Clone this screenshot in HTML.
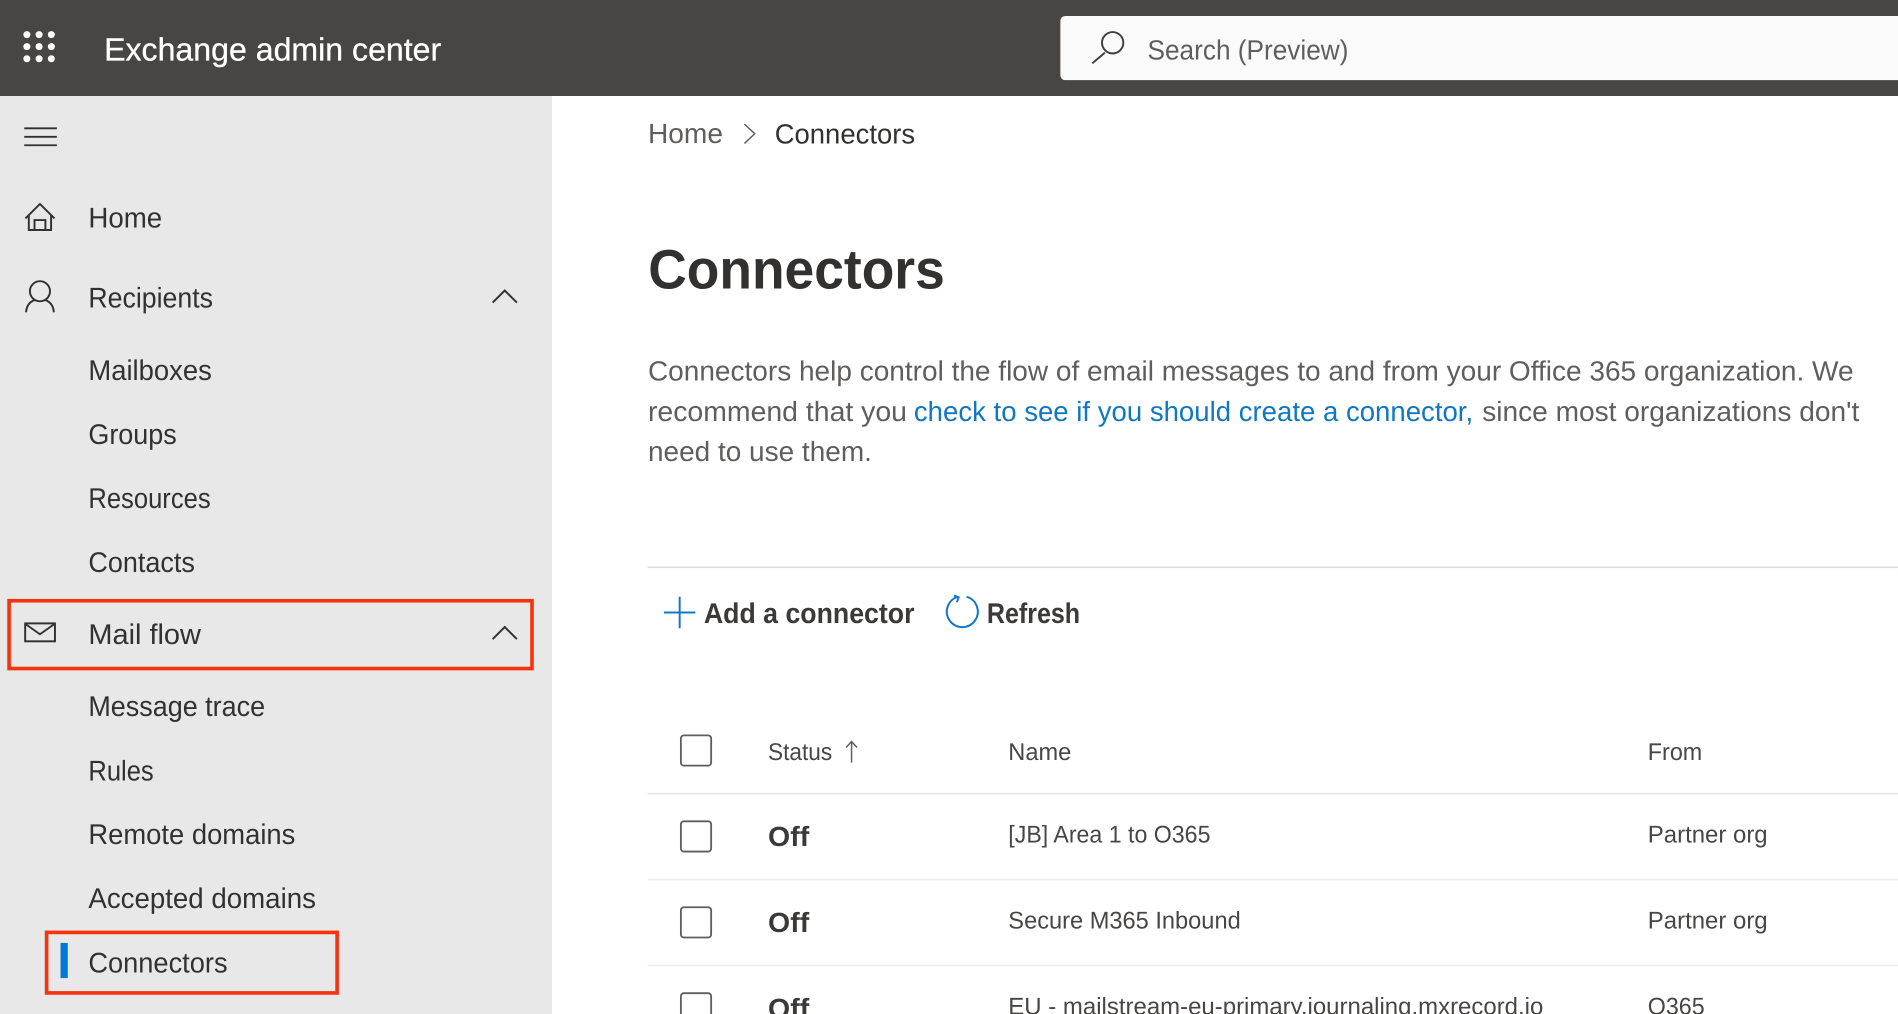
<!DOCTYPE html>
<html lang="en"><head><meta charset="utf-8"><title>Exchange admin center - Connectors</title>
<style>
html,body{margin:0;padding:0;background:#fff;width:1898px;height:1014px;overflow:hidden}
svg{display:block;position:absolute;left:0;top:0}
text{font-family:"Liberation Sans",sans-serif;fill:#323130;text-rendering:geometricPrecision}
.nav{font-size:23.5px}
.p{font-size:23px;fill:#605e5c}
.t{font-size:20px;fill:#484644}
.off{font-size:23px;font-weight:bold;fill:#3b3a39}
.btn{font-size:23.5px;font-weight:bold;fill:#3b3a39}
</style></head><body>
<svg width="1898" height="1014" viewBox="0 0 1568 837.7" xmlns="http://www.w3.org/2000/svg">
<rect width="1568" height="838" fill="#fff"/>
<rect width="456" y="79.3" height="759" fill="#e8e8e8"/>
<rect width="1568" height="79.3" fill="#474645"/>
<g fill="#fff"><circle cx="22.2" cy="28.6" r="2.9"/><circle cx="32.3" cy="28.6" r="2.9"/><circle cx="42.4" cy="28.6" r="2.9"/><circle cx="22.2" cy="38.5" r="2.9"/><circle cx="32.3" cy="38.5" r="2.9"/><circle cx="42.4" cy="38.5" r="2.9"/><circle cx="22.2" cy="48.5" r="2.9"/><circle cx="32.3" cy="48.5" r="2.9"/><circle cx="42.4" cy="48.5" r="2.9"/></g>
<text x="86" y="50" font-size="26.5" style="fill:#fff;stroke:#fff;stroke-width:.25" textLength="278.5" lengthAdjust="spacingAndGlyphs">Exchange admin center</text>
<rect x="876" y="13.2" width="700" height="53" rx="4" fill="#fafafa"/>
<circle cx="919.2" cy="35.3" r="8.8" fill="none" stroke="#3f3e3d" stroke-width="1.6"/>
<path d="M912.8 43.5 L902.4 52.3" stroke="#3f3e3d" stroke-width="1.6" fill="none"/>
<text x="948" y="49" font-size="23" style="fill:#605e5c" textLength="166" lengthAdjust="spacingAndGlyphs">Search (Preview)</text>

<path d="M20 106H47M20 113H47M20 120H47" stroke="#323130" stroke-width="1.5" fill="none"/>
<path d="M21 180.5 L33 168.5 L45 180.5 M23.8 177.5 V190 H42.2 V177.5 M28.5 190 V181.8 H37.5 V190" stroke="#323130" stroke-width="1.6" fill="none"/>
<circle cx="33" cy="240.6" r="8.3" fill="none" stroke="#323130" stroke-width="1.6"/>
<path d="M21.5 258 C22 252 25 249 29 247.8 M44.5 258 C44 252 41 249 37 247.8" stroke="#323130" stroke-width="1.6" fill="none"/>
<path d="M407 250 L417 240 L427 250" stroke="#323130" stroke-width="1.6" fill="none"/>
<rect x="20.8" y="515" width="24.6" height="14.8" stroke="#323130" stroke-width="1.6" fill="none"/>
<path d="M21 515.5 L33 524 L45 515.5" stroke="#323130" stroke-width="1.5" fill="none"/>
<path d="M407 528 L417 518 L427 528" stroke="#323130" stroke-width="1.6" fill="none"/>

<text class="nav" x="73" y="188" textLength="61" lengthAdjust="spacingAndGlyphs">Home</text>
<text class="nav" x="73" y="254" textLength="103" lengthAdjust="spacingAndGlyphs">Recipients</text>
<text class="nav" x="73" y="314" textLength="102" lengthAdjust="spacingAndGlyphs">Mailboxes</text>
<text class="nav" x="73" y="367" textLength="73" lengthAdjust="spacingAndGlyphs">Groups</text>
<text class="nav" x="73" y="419.7" textLength="101" lengthAdjust="spacingAndGlyphs">Resources</text>
<text class="nav" x="73" y="472.7" textLength="88" lengthAdjust="spacingAndGlyphs">Contacts</text>
<text class="nav" x="73" y="532" textLength="93" lengthAdjust="spacingAndGlyphs">Mail flow</text>
<text class="nav" x="73" y="591.7" textLength="146" lengthAdjust="spacingAndGlyphs">Message trace</text>
<text class="nav" x="73" y="644.7" textLength="54" lengthAdjust="spacingAndGlyphs">Rules</text>
<text class="nav" x="73" y="697.3" textLength="171" lengthAdjust="spacingAndGlyphs">Remote domains</text>
<text class="nav" x="73" y="750.3" textLength="188" lengthAdjust="spacingAndGlyphs">Accepted domains</text>
<text class="nav" x="73" y="803.3" textLength="115" lengthAdjust="spacingAndGlyphs">Connectors</text>

<rect x="7.5" y="496.3" width="432" height="56" fill="none" stroke="#f4330f" stroke-width="3"/>
<rect x="38.5" y="770.3" width="240" height="50" fill="none" stroke="#f4330f" stroke-width="3"/>
<rect x="50" y="779" width="6" height="29" fill="#0078d4"/>

<text x="535.3" y="118.3" font-size="23" style="fill:#605e5c" textLength="62" lengthAdjust="spacingAndGlyphs">Home</text>
<path d="M615 102.5 L623.5 110.5 L615 118.5" stroke="#605e5c" stroke-width="1.2" fill="none"/>
<text x="640" y="118.7" font-size="23" textLength="116" lengthAdjust="spacingAndGlyphs">Connectors</text>

<text x="535.5" y="238.3" font-size="46" font-weight="bold" textLength="245" lengthAdjust="spacingAndGlyphs">Connectors</text>

<text class="p" x="535.3" y="314.5" textLength="996" lengthAdjust="spacingAndGlyphs">Connectors help control the flow of email messages to and from your Office 365 organization. We</text>
<text class="p" x="535.3" y="348" textLength="214" lengthAdjust="spacingAndGlyphs">recommend that you</text>
<text class="p" x="755" y="348" style="fill:#0f77c4" textLength="462" lengthAdjust="spacingAndGlyphs">check to see if you should create a connector,</text>
<text class="p" x="1224.5" y="348" textLength="311.5" lengthAdjust="spacingAndGlyphs">since most organizations don't</text>
<text class="p" x="535.3" y="381" textLength="185" lengthAdjust="spacingAndGlyphs">need to use them.</text>

<rect x="535" y="468" width="1033" height="1.3" fill="#dcdcdc"/>

<path d="M548.5 506H574.5M561.5 493V519" stroke="#0f77c4" stroke-width="1.6" fill="none"/>
<text class="btn" x="581.5" y="514.7" textLength="174" lengthAdjust="spacingAndGlyphs">Add a connector</text>
<path d="M791.5 493 A12.8 12.8 0 1 0 798.5 493" stroke="#0f77c4" stroke-width="1.6" fill="none"/>
<path d="M788 492 L792 493.5 L790.5 497.5" stroke="#0f77c4" stroke-width="1.6" fill="none"/>
<text class="btn" x="815.3" y="514.7" textLength="77" lengthAdjust="spacingAndGlyphs">Refresh</text>

<g fill="#fff" stroke="#605e5c" stroke-width="1.5">
<rect x="562.5" y="607.5" width="25" height="25" rx="2.5"/>
<rect x="562.5" y="678.5" width="25" height="25" rx="2.5"/>
<rect x="562.5" y="749.5" width="25" height="25" rx="2.5"/>
<rect x="562.5" y="820.5" width="25" height="25" rx="2.5"/>
</g>
<text class="t" x="634.5" y="628" textLength="53" lengthAdjust="spacingAndGlyphs">Status</text>
<path d="M703.5 630 V612.5 M699 617.5 L703.5 612.5 L708 617.5" stroke="#605e5c" stroke-width="1.2" fill="none"/>
<text class="t" x="833" y="628" textLength="52" lengthAdjust="spacingAndGlyphs">Name</text>
<text class="t" x="1361.3" y="628" textLength="45" lengthAdjust="spacingAndGlyphs">From</text>

<rect x="535" y="655" width="1033" height="1.3" fill="#e6e6e6"/>
<rect x="535" y="726" width="1033" height="1.3" fill="#eeeeee"/>
<rect x="535" y="797" width="1033" height="1.3" fill="#eeeeee"/>

<text class="off" x="634.5" y="699" textLength="34" lengthAdjust="spacingAndGlyphs">Off</text>
<text class="t" x="833" y="696" textLength="167" lengthAdjust="spacingAndGlyphs">[JB] Area 1 to O365</text>
<text class="t" x="1361.3" y="696" textLength="99" lengthAdjust="spacingAndGlyphs">Partner org</text>
<text class="off" x="634.5" y="770" textLength="34" lengthAdjust="spacingAndGlyphs">Off</text>
<text class="t" x="833" y="767" textLength="192" lengthAdjust="spacingAndGlyphs">Secure M365 Inbound</text>
<text class="t" x="1361.3" y="767" textLength="99" lengthAdjust="spacingAndGlyphs">Partner org</text>
<text class="off" x="634.5" y="841" textLength="34" lengthAdjust="spacingAndGlyphs">Off</text>
<text class="t" x="833" y="838" textLength="442" lengthAdjust="spacingAndGlyphs">EU - mailstream-eu-primary.journaling.mxrecord.io</text>
<text class="t" x="1361.3" y="838" textLength="47" lengthAdjust="spacingAndGlyphs">O365</text>
</svg>
</body></html>
